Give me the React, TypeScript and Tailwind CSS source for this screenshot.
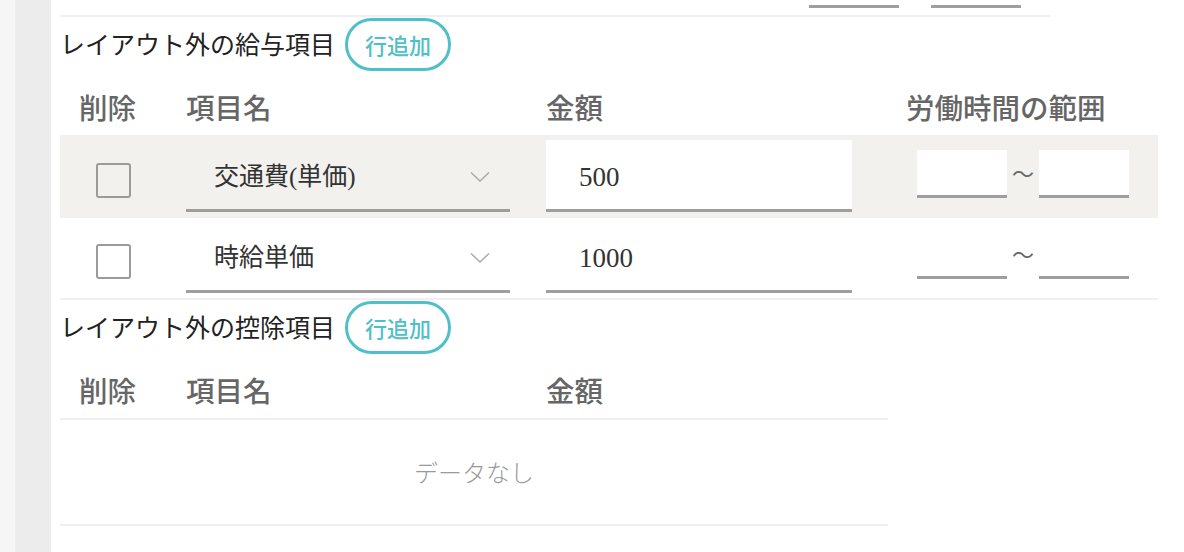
import React from "react";

const FONT = { fontFamily: '"Liberation Serif", "Noto Sans CJK JP", serif' };

function Chevron() {
  return (
    <svg width="20" height="12" viewBox="0 0 20 12" fill="none">
      <path d="M1 1.5 L10 10 L19 1.5" stroke="#a8a8a8" strokeWidth="1.4" />
    </svg>
  );
}

function Checkbox() {
  return <div className="mt-[26px] ml-[36px] h-[35px] w-[35px] rounded-[3px] border-2 border-[#9b9b9b]" />;
}

function SectionTitle({ title }: { title: string }) {
  return (
    <div className="flex h-[54px] items-center">
      <span className="text-[25px] text-[#222]" style={{ fontFamily: '"Noto Sans CJK JP", sans-serif' }}>
        {title}
      </span>
      <button className="ml-[10px] flex h-[53px] w-[106px] items-center justify-center rounded-full border-[3px] border-[#4fc0c8] text-[22px] font-medium text-[#4fc0c8]" style={{ fontFamily: '"Noto Sans CJK JP", sans-serif' }}>
        行追加
      </button>
    </div>
  );
}

function Header({ withRange }: { withRange: boolean }) {
  const cls = "text-[28.5px] font-medium text-[#666] leading-[42px]";
  return (
    <div className="flex h-[64px] items-start pt-[15px]" style={{ fontFamily: '"Noto Sans CJK JP", sans-serif' }}>
      <div className={`w-[108px] pl-[19px] ${cls}`}>削除</div>
      <div className={`w-[360px] pl-[18px] ${cls}`}>項目名</div>
      <div className={`w-[342px] pl-[18px] ${cls}`}>金額</div>
      {withRange && <div className={`w-[288px] pl-[36px] ${cls}`}>労働時間の範囲</div>}
    </div>
  );
}

function Row({ name, amount, gray }: { name: string; amount: string; gray: boolean }) {
  return (
    <div className={`flex h-[80px] items-start ${gray ? "bg-[#f2f1ee]" : "bg-white"}`}>
      <div className="w-[108px]">
        <Checkbox />
      </div>
      <div className="w-[360px] pl-[18px]">
        <div className="mt-[3px] flex h-[72px] w-[324px] items-center justify-between border-b-[3px] border-[#9e9e9e] pl-[28px] pr-[20px] pt-[4px]">
          <span className="text-[25px] text-[#333]">{name}</span>
          <Chevron />
        </div>
      </div>
      <div className="w-[342px] pl-[18px]">
        <div className="mt-[3px] flex h-[72px] w-[306px] items-center border-b-[3px] border-[#9e9e9e] bg-white pl-[33px] pt-[6px]">
          <span className="text-[27px] text-[#333]">{amount}</span>
        </div>
      </div>
      <div className="flex w-[288px] pl-[47px]">
        <div className="mt-[13px] h-[48px] w-[90px] border-b-[3px] border-[#9e9e9e] bg-white" />
        <div className="mt-[24px] flex w-[32px] justify-center text-[22px] leading-none text-[#666]" style={{ fontFamily: '"Noto Sans CJK JP", sans-serif' }}>
          〜
        </div>
        <div className="mt-[13px] h-[48px] w-[90px] border-b-[3px] border-[#9e9e9e] bg-white" />
      </div>
    </div>
  );
}

export default function App() {
  return (
    <div className="flex min-h-[552px] w-[1184px] bg-white" style={FONT}>
      <div className="w-[15px] shrink-0 bg-[#f6f6f6]" />
      <div className="w-[36px] shrink-0 bg-[#ececec]" />
      <div className="flex-1 pl-[9px]">
        {/* previous table tail */}
        <div className="flex h-[17px] w-[990px] border-b-2 border-[#eef0f5] pl-[749px]">
          <div className="mt-[5px] h-[3px] w-[90px] bg-[#9e9e9e]" />
          <div className="ml-[32px] mt-[5px] h-[3px] w-[90px] bg-[#9e9e9e]" />
        </div>

        <SectionTitle title="レイアウト外の給与項目" />
        <div className="w-[1098px]">
          <Header withRange />
          <div className="border-t-2 border-[#eef0f5]">
            <Row name="交通費(単価)" amount="500" gray />
          </div>
          <div className="border-t-[1px] border-[#eef0f5]">
            <Row name="時給単価" amount="1000" gray={false} />
          </div>
          <div className="border-t-2 border-[#eef0f5]" />
        </div>

        <SectionTitle title="レイアウト外の控除項目" />
        <div className="w-[828px]">
          <Header withRange={false} />
          <div className="flex h-[108px] items-center justify-center border-y-2 border-[#eceff4]">
            <span className="text-[24px] font-light text-[#999]" style={{ fontFamily: '"Noto Sans CJK JP", sans-serif' }}>
              データなし
            </span>
          </div>
        </div>
      </div>
    </div>
  );
}
